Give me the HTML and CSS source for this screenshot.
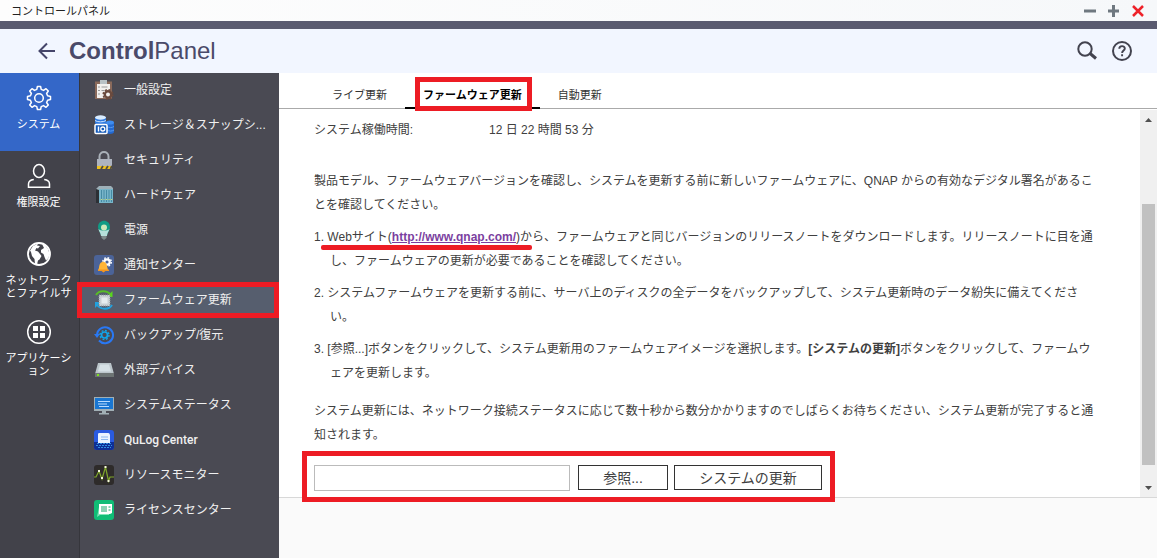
FILE: index.html
```html
<!DOCTYPE html>
<html lang="ja">
<head>
    <meta charset="UTF-8">
    <meta name="viewport" content="width=device-width, initial-scale=1.0">
    <title>コントロールパネル</title>
    <link rel="stylesheet" href="styles.css">
</head>
<body>
    <div class="titlebar">
        <span>コントロールパネル</span>
        <div class="window-buttons">
            <button type="button" aria-label="最小化"><svg width="12" height="12"><path d="M0 6h12" stroke="#6f7880" stroke-width="3"/></svg></button>
            <button type="button" aria-label="最大化"><svg width="12" height="12"><path d="M0 6h11M5.500 0v12" stroke="#6f7880" stroke-width="3"/></svg></button>
            <button type="button" aria-label="閉じる"><svg width="12" height="12"><path d="M1 1l10 10M11 1L1 11" stroke="#ee2229" stroke-width="2.500"/></svg></button>
        </div>
    </div>

    <header>
        <button type="button" class="back" aria-label="戻る"><svg width="18" height="18" fill="none" stroke="#45456a" stroke-width="2"><path d="M17 9H2M9 1.500L1.500 9L9 16.500"/></svg></button>
        <h1><b>Control</b>Panel</h1>
        <div class="header-tools">
            <button type="button" aria-label="検索"><svg width="20" height="20" fill="none" stroke="#43434f"><circle cx="8" cy="8" r="6.700" stroke-width="2"/><path d="M12.500 12l6.500 5.500" stroke-width="3"/></svg></button>
            <button type="button" aria-label="ヘルプ"><svg width="20" height="20" fill="none" stroke="#43434f"><circle cx="10" cy="10" r="9" stroke-width="2"/><path d="M7.300 7.800c0-3.600 5.500-3.500 5.500-.4 0 2-2.700 2.200-2.700 4.600M10.100 13.300v2" stroke-width="1.900"/></svg></button>
        </div>
    </header>

    <div class="main">
        <nav class="categories">
            <a href="#" class="current">
                <svg width="26" height="26" viewBox="0 0 26 26" fill="none" stroke="#fff" stroke-width="1.500" stroke-linejoin="round"><path d="M10.800 4.400L11.400 1.500h3.200l.6 2.900 2.300 1 2.500-1.700 2.300 2.300-1.700 2.500 1 2.300 2.900.6v3.200l-2.900.6-1 2.300 1.700 2.500-2.300 2.300-2.500-1.700-2.300 1-.6 2.900h-3.200l-.6-2.900-2.300-1-2.500 1.700-2.300-2.300 1.700-2.500-1-2.300-2.900-.6v-3.200l2.900-.6 1-2.300-1.700-2.500 2.300-2.300 2.500 1.700z"/><circle cx="13" cy="13" r="4.300"/></svg>
                <span>システム</span>
            </a>
            <a href="#">
                <svg width="26" height="26" viewBox="0 0 26 26" fill="none" stroke="#fff" stroke-width="1.500"><ellipse cx="13" cy="8" rx="5.500" ry="6.500"/><path d="M7.800 16.500C4 17 2.500 18 2.500 21v3.200h21V21c0-3-1.500-4-5.300-4.500"/></svg>
                <span>権限設定</span>
            </a>
            <a href="#">
                <svg width="26" height="26" viewBox="0 0 26 26"><circle cx="13" cy="13" r="11" fill="none" stroke="#fff" stroke-width="1.800"/><path fill="#fff" d="M4 9.500L7 5l5-2.500-1 2 3 .5-2 2.500-1.500-.5-1.500 2.500 3 1 2 2.500 1.500 2-2 3.500-1.500 1-1 4-2-.5-.5-5-2.500-3L5 11zM16 3l3 1 3 4 1.500 5-1 4-2.500 2.500-1.500-3.500-1-3-2.500-1.500V9l3-2z"/></svg>
                <span>ネットワークとファイルサ</span>
            </a>
            <a href="#">
                <svg width="26" height="26" viewBox="0 0 26 26"><circle cx="13" cy="13" r="11.300" fill="none" stroke="#fff" stroke-width="1.500"/><path fill="#fff" d="M7 7h5v5H7zM14 7h5v5h-5zM7 14h5v5H7zM14 14h5v5h-5z"/></svg>
                <span>アプリケーション</span>
            </a>
        </nav>

        <nav class="pages">
            <a href="#">
                <svg width="20" height="20"><path fill="#8a6a5b" d="M1 1.500h17V19H1z"/><path fill="#f2f0ee" d="M3 4h13v14H3z"/><path fill="#b9c2c6" d="M6 0h7v4H6z"/><path d="M4 7h2M4 10.500h2M4 14h2M7.500 7h6M7.500 10.500h3" stroke="#9a9a9a"/><circle cx="14" cy="14.500" r="3.200" fill="none" stroke="#6b4a3d" stroke-width="2.400"/><circle cx="14" cy="14.500" r="4.800" fill="none" stroke="#6b4a3d" stroke-width="1.500" stroke-dasharray="2 1.770"/></svg>
                <span>一般設定</span>
            </a>
            <a href="#">
                <svg width="20" height="20"><path fill="#2e79e0" d="M1 2v6c0 2.500 11 2.500 11 0V2z"/><ellipse cx="6.500" cy="2.500" rx="5.500" ry="2.200" fill="#d9ecff"/><path d="M1 5.500c2 1.800 9 1.800 11 0" stroke="#cfe6ff" fill="none"/><path fill="#2469d0" d="M12 7.500V17c0 2.500 8 2.500 8 0V7.500z"/><ellipse cx="16" cy="7.500" rx="4" ry="2" fill="#3f8df0"/><path d="M13 11.500c2 1.400 5 1.400 7 0M13 15c2 1.400 5 1.400 7 0" stroke="#5b9df0" fill="none"/><rect x="1" y="9.500" width="12" height="9" rx="1" fill="#1258b8" stroke="#fff" stroke-width="1.500"/><path d="M4.500 11.500v5" stroke="#fff" stroke-width="1.500"/><circle cx="8.800" cy="14" r="2" fill="none" stroke="#fff" stroke-width="1.300"/></svg>
                <span>ストレージ＆スナップシ...</span>
            </a>
            <a href="#">
                <svg width="20" height="20"><path d="M5.500 10V6.500c0-6 9-6 9 0V10" fill="none" stroke="#a9b0b8" stroke-width="2"/><path fill="#aeb4bf" d="M3 9h15v7H3z"/><path fill="#efc11e" d="M3 16h15v3H3z"/><path d="M7 19l2-3M12 19l2-3M16.500 19l1.500-3" stroke="#514d42" stroke-width="1.800"/></svg>
                <span>セキュリティ</span>
            </a>
            <a href="#">
                <svg width="20" height="20"><path fill="#2c3035" d="M2 4l4-2v16H2z"/><path fill="#9eb0b8" d="M2 4l3-3h12l2 2v2H5z"/><path fill="#78b5c9" d="M5 4h14v14H5z"/><path d="M7.500 5v12M10 5v12M12.500 5v12M15 5v12M17.500 5v12" stroke="#468ba4"/><path d="M7 14.500h11" stroke="#d2df67" stroke-dasharray="1 1.500"/></svg>
                <span>ハードウェア</span>
            </a>
            <a href="#">
                <svg width="20" height="20"><path fill="#7e8b8b" d="M7.500 14h5v4l-2.500 2-2.500-2z"/><path fill="#109b85" d="M4 7C4-1.500 16-1.500 16 7c0 3-2 5-3 8H7C6 12 4 10 4 7z"/><path fill="#b6dfda" d="M4.500 9c2 2 9 2 11 0-1 3-2 3-2.500 7H7c-.5-4-2-4-2.500-7z"/><circle cx="10" cy="7.500" r="3" fill="#cce8ba"/></svg>
                <span>電源</span>
            </a>
            <a href="#">
                <svg width="20" height="20"><rect width="20" height="20" rx="3" fill="#4b6398"/><circle cx="13" cy="7" r="2.700" fill="none" stroke="#fff" stroke-width="2.200"/><circle cx="13" cy="7" r="4.300" fill="none" stroke="#fff" stroke-width="1.400" stroke-dasharray="1.700 1.680"/><path fill="#ffb536" d="M4 15c2-2 0-6 4-8 3-1 5 2 5 4l1 4z"/><path fill="#f29520" d="M4 14.500h11v1.500H4zM7.500 16h4l-2 1.500z"/></svg>
                <span>通知センター</span>
            </a>
            <a href="#" class="current marked">
                <svg width="20" height="20"><path d="M2 5c3-5 11-5 15 0" fill="none" stroke="#58bd27" stroke-width="2"/><path fill="#58d61e" d="M18.500 1v6h-6z"/><path d="M18 15c-3 5-11 5-15 0" fill="none" stroke="#22a1df" stroke-width="2"/><path fill="#22a1df" d="M1 18v-6h6z"/><path d="M5 5h11v11H5z" fill="#c9d0d4" stroke="#8a949b" stroke-dasharray="1 1"/><path fill="#e6ecef" d="M7.500 7.500h6v6h-6z"/></svg>
                <span>ファームウェア更新</span>
            </a>
            <a href="#">
                <svg width="20" height="20" fill="none"><path d="M3 10.500A8 8 0 1 1 5 15.500" stroke="#2978f4" stroke-width="2"/><path fill="#2978f4" d="M0 9h6l-3 4z"/><circle cx="10.500" cy="10" r="3" stroke="#10a6ea" stroke-width="1.700"/><circle cx="10.500" cy="10" r="4.500" stroke="#10a6ea" stroke-width="1.400" stroke-dasharray="1.800 1.730"/></svg>
                <span>バックアップ/復元</span>
            </a>
            <a href="#">
                <svg width="20" height="20"><path fill="#bcc6cb" d="M4 3h13l3 11H1z"/><path fill="#d6e0e5" d="M6 4.500h9l2 7H4z"/><path fill="#6d7474" d="M1 13h19v4H1z"/><path fill="#7ee01e" d="M3 14h2v2H3z"/></svg>
                <span>外部デバイス</span>
            </a>
            <a href="#">
                <svg width="20" height="20"><path fill="#a1afb5" d="M0 2h20v14H0zM8 16h4v2h3v1.500H5V18h3z"/><path fill="#1976d2" d="M1 3h18v11H1z"/><path d="M4 6.500h12M4 9h9M5 11.500h10" stroke="#b9dcff"/></svg>
                <span>システムステータス</span>
            </a>
            <a href="#">
                <svg width="20" height="20"><rect width="20" height="20" rx="3" fill="#2a5be0"/><path fill="#0f2f96" d="M0 12h20v5a3 3 0 0 1-3 3H3a3 3 0 0 1-3-3z"/><path fill="#eaf4ff" d="M5 3h9c2 0 2 2 2 3v7H4V5c0-1 0-2 1-2z"/><path d="M7 7h7M7 9.500h7" stroke="#8db9ef"/><path d="M3 13.500h14M2 15.500h16M4 17.500h13" stroke="#2f8fe0" stroke-dasharray="2 1"/></svg>
                <span class="latin">QuLog Center</span>
            </a>
            <a href="#">
                <svg width="20" height="20"><rect width="20" height="20" rx="3" fill="#2e2b2a"/><path d="M0 12h2l3-6 3 8 3.500-12 3 14 1.500-4h4" fill="none" stroke="#7fa62b" stroke-width="1.200"/><path fill="#f4f8da" d="M4 5h2v2H4zM7 12h2v2H7zM10.500 1h2v2h-2zM13.500 15h2v2h-2z"/></svg>
                <span>リソースモニター</span>
            </a>
            <a href="#">
                <svg width="20" height="20"><rect width="20" height="20" rx="3" fill="#10bd76"/><path fill="#81e5b8" d="M5 7h10v8H6l-3 2z"/><path fill="#fff" d="M5 4h13v9l-2 1H5z"/><path d="M7 7h6M7 9h6M7 11h6M14.500 7h2M14.500 10h2" stroke="#12a868"/></svg>
                <span>ライセンスセンター</span>
            </a>
        </nav>

        <div class="panel">
            <div class="tabs">
                <button type="button">ライブ更新</button>
                <button type="button" class="active marked">ファームウェア更新</button>
                <button type="button">自動更新</button>
            </div>
            <div class="scroll-area">
                <div class="content">
                    <div class="uptime"><span>システム稼働時間:</span><span>12 日 22 時間 53 分</span></div>
                    <p>製品モデル、ファームウェアバージョンを確認し、システムを更新する前に新しいファームウェアに、QNAP からの有効なデジタル署名があることを確認してください。</p>
                    <ol>
                        <li>1. <span class="underlined">Webサイト(<a href="http://www.qnap.com/">http://www.qnap.com/</a>)か</span>ら、ファームウェアと同じバージョンのリリースノートをダウンロードします。リリースノートに目を通し、ファームウェアの更新が必要であることを確認してください。</li>
                        <li>2. システムファームウェアを更新する前に、サーバ上のディスクの全データをバックアップして、システム更新時のデータ紛失に備えてください。</li>
                        <li>3. [参照...]ボタンをクリックして、システム更新用のファームウェアイメージを選択します。<b>[システムの更新]</b>ボタンをクリックして、ファームウェアを更新します。</li>
                    </ol>
                    <p>システム更新には、ネットワーク接続ステータスに応じて数十秒から数分かかりますのでしばらくお待ちください、システム更新が完了すると通知されます。</p>
                    <form class="upload marked">
                        <input type="text" aria-label="ファームウェアイメージ">
                        <button type="button" class="browse">参照...</button>
                        <button type="button" class="update">システムの更新</button>
                    </form>
                </div>
                <div class="scrollbar">
                    <svg width="7" height="4"><path fill="#505050" d="M0 4l3.500-4L7 4z"/></svg>
                    <div class="track"><div class="thumb"></div></div>
                    <svg width="7" height="4"><path fill="#505050" d="M0 0h7L3.500 4z"/></svg>
                </div>
            </div>
            <div class="panel-footer"></div>
        </div>
    </div>
</body>
</html>
```
FILE: styles.css
```css
* {
    box-sizing: border-box;
}

body {
    margin: 0;
    height: 100vh;
    display: flex;
    flex-direction: column;
    overflow: hidden;
    font-family: "Liberation Sans", "Noto Sans CJK JP", sans-serif;
    font-size: 12px;
    color: #404040;
    background-color: #fff;
}

button {
    font-family: inherit;
    color: inherit;
    background: none;
    border: none;
    padding: 0;
    cursor: pointer;
}

svg {
    display: block;
    flex-shrink: 0;
}

.titlebar {
    display: flex;
    justify-content: space-between;
    align-items: center;
    height: 29px;
    padding: 0 13px 0 11px;
    font-size: 11px;
    line-height: 20px;
    color: #222;
    background: linear-gradient(to right, #fdfdfd, #f6f8fa);
    border-bottom: 8px solid #5a5b70;
}

.window-buttons {
    display: flex;
    gap: 12px;
}

header {
    display: flex;
    align-items: center;
    height: 44px;
    padding: 0 25px 0 38px;
    background-color: #f2f6ff;
}

h1 {
    margin: 0 0 0 13px;
    font-size: 24px;
    font-weight: normal;
    line-height: 28px;
    color: #4a4a6a;
}

.header-tools {
    display: flex;
    gap: 15px;
    margin-left: auto;
}

.main {
    flex: 1;
    display: flex;
    min-height: 0;
}

/* left column */
.categories {
    flex: 0 0 80px;
    background-color: #42424a;
    border-right: 1px solid #36363c;
}

.categories a {
    display: flex;
    flex-direction: column;
    align-items: center;
    gap: 7px;
    height: 78px;
    padding: 12px 7px 0 5px;
    font-size: 11px;
    line-height: 13px;
    text-align: center;
    color: #fff;
    text-decoration: none;
}

.categories .current {
    background-color: #3467c8;
}

/* second column */
.pages {
    flex: 0 0 199px;
    background-color: #4a4a53;
}

.pages a {
    position: relative;
    display: flex;
    align-items: center;
    gap: 10px;
    height: 35px;
    padding: 0 0 1px 14px;
    line-height: 16px;
    color: #f0f0f0;
    text-decoration: none;
    white-space: nowrap;
}

.pages .current {
    background-color: #565e6e;
}

.latin {
    font-family: Roboto, sans-serif;
    font-weight: 500;
}

/* red boxes round the steps to follow */
.marked {
    position: relative;
}

.marked::after {
    content: "";
    position: absolute;
    border: 5px solid #ed1c24;
    pointer-events: none;
}

.pages .marked::after {
    inset: -1px 0 0 -3px;
}

.tabs .marked::after {
    inset: 4px 8px -4px 10px;
}

.upload.marked::after {
    inset: -14px -13px -11px -12px;
}

.panel {
    flex: 1;
    display: flex;
    flex-direction: column;
    min-width: 0;
}

.tabs {
    display: flex;
    height: 36px;
    padding-left: 35px;
    border-bottom: 1px solid #aaa;
}

.tabs button {
    height: 36px;
    padding: 7px 18px 0;
    font-size: 11px;
    color: #333;
    border-bottom: 2px solid transparent;
}

.tabs .active {
    font-weight: bold;
    color: #000;
    border-bottom-color: #000;
    z-index: 1;
}

.scroll-area {
    flex: 1;
    display: flex;
    min-height: 0;
}

.content {
    flex: 1;
    padding: 9px 40px 0 35px;
    line-height: 24px;
}

.uptime {
    display: flex;
    margin-bottom: 27px;
}

.uptime span:first-child {
    width: 175px;
}

.content p {
    margin: 0;
}

.content ol {
    list-style: none;
    margin: 8px 0 14px;
    padding: 0 0 0 16px;
}

.content li {
    text-indent: -16px;
}

.content li + li {
    margin-top: 8px;
}

.content a {
    font-weight: bold;
    color: #7b3fa0;
}

.underlined {
    position: relative;
}

.underlined::after {
    content: "";
    position: absolute;
    left: -6px;
    right: 0;
    bottom: -6px;
    height: 5px;
    border-radius: 2px;
    background-color: #ed1c24;
}

.upload {
    display: flex;
    align-items: flex-start;
    width: 508px;
    margin-top: 18px;
}

.upload input {
    width: 256px;
    height: 26px;
    margin-right: 8px;
    padding: 0 4px;
    border: 1px solid #bbb;
}

.upload button {
    height: 25px;
    font-size: 14px;
    line-height: 20px;
    border: 1px solid #333;
    background-color: #fff;
}

.upload .browse {
    width: 90px;
    margin-right: 6px;
}

.upload .update {
    width: 148px;
}

.scrollbar {
    flex: 0 0 17px;
    display: flex;
    flex-direction: column;
    align-items: center;
    padding: 8px 0 7px;
    background-color: #f0f0f0;
    border-top: 1px solid #fff;
}

.track {
    flex: 1;
    width: 13px;
    display: flex;
    flex-direction: column;
    justify-content: flex-end;
    padding-bottom: 21px;
}

.thumb {
    height: 76%;
    background-color: #c1c1c1;
}

.panel-footer {
    height: 61px;
    background-color: #fafafa;
    border-top: 1px solid #d8d8d8;
}
```
